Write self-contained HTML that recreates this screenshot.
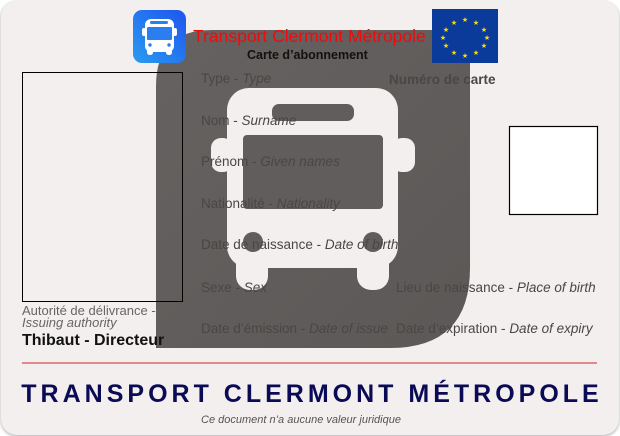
<!DOCTYPE html>
<html><head><meta charset="utf-8"><style>
*{margin:0;padding:0;box-sizing:border-box}
body{width:620px;height:436px;background:#fff;font-family:"Liberation Sans",sans-serif;position:relative;overflow:hidden}
.card{position:absolute;left:1px;top:1px;width:618px;height:434px;background:#f3efee;border-radius:16px;box-shadow:0 1px 3px rgba(0,0,0,.35)}
.a{position:absolute;white-space:nowrap}
.f{font-size:13.5px;color:#4a4646}
.f i{color:#4a4646}
</style></head><body>
<div class="card"></div>
<svg class="a" style="left:0;top:0" width="620" height="436">
<defs><linearGradient id="g" x1="0" y1="0" x2="1" y2="1"><stop offset="0" stop-color="#666261"/><stop offset="1" stop-color="#5c5857"/></linearGradient>
<linearGradient id="b" x1="0" y1="1" x2="1" y2="0"><stop offset="0" stop-color="#2a9bf0"/><stop offset="1" stop-color="#1f55ee"/></linearGradient></defs>
<path d="M156 348 L156 86 Q156 30 212 30 L460 30 Q470 30 470 40 L470 268 Q470 348 390 348 Z" fill="url(#g)"/>
<g fill="#f3efee">
<rect x="227" y="88" width="171" height="180" rx="22"/>
<rect x="211" y="138" width="22" height="34" rx="10"/>
<rect x="392" y="138" width="23" height="34" rx="10"/>
<rect x="236" y="250" width="32" height="40" rx="14"/>
<rect x="357" y="250" width="32" height="40" rx="14"/>
</g>
<g fill="#615d5c">
<rect x="272" y="104" width="82" height="17" rx="7"/>
<rect x="243" y="135" width="140" height="74" rx="4"/>
<circle cx="253" cy="242" r="10"/><circle cx="373" cy="242" r="10"/>
</g>
<rect x="133" y="10" width="53" height="53" rx="9" fill="url(#b)"/>
<g fill="#fff">
<rect x="145" y="19" width="29" height="33" rx="6"/>
<rect x="142" y="28" width="4" height="8" rx="2"/><rect x="173" y="28" width="4" height="8" rx="2"/>
<rect x="147" y="48" width="6" height="7" rx="2.5"/><rect x="166" y="48" width="6" height="7" rx="2.5"/>
</g>
<rect x="150" y="21" width="18" height="3" rx="1.5" fill="#2a7ef0"/>
<rect x="147" y="27" width="25" height="13" rx="1" fill="#2a7ef0"/>
<circle cx="150" cy="45" r="1.7" fill="#2a7ef0"/><circle cx="169" cy="45" r="1.7" fill="#2a7ef0"/>
<rect x="432" y="9" width="66" height="54" fill="#0a3a9a"/>
<g fill="#ffdd00" font-size="7" text-anchor="middle" font-family="DejaVu Sans">
<text x="465" y="22">★</text><text x="476" y="25">★</text><text x="484" y="32">★</text><text x="487" y="40">★</text><text x="484" y="48">★</text><text x="476" y="55">★</text><text x="465" y="58">★</text><text x="454" y="55">★</text><text x="446" y="48">★</text><text x="443" y="40">★</text><text x="446" y="32">★</text><text x="454" y="25">★</text>
</g>
<rect x="22.5" y="72.5" width="160" height="229" fill="none" stroke="#000" stroke-width="1"/>
<rect x="509.5" y="126.5" width="88" height="88" fill="#fff" stroke="#000" stroke-width="1.2"/>
<rect x="22" y="362" width="575" height="2" fill="#e08a90"/>
</svg>
<div class="a" style="left:193px;top:26px;font-size:17.5px;color:#f00a0a">Transport Clermont Métropole</div>
<div class="a" style="left:247px;top:48px;font-size:12.5px;font-weight:bold;color:#111">Carte d’abonnement</div>
<div class="a f" style="left:201px;top:71px">Type - <i>Type</i></div>
<div class="a f" style="left:389px;top:72px;font-weight:bold">Numéro de carte</div>
<div class="a f" style="left:201px;top:113px">Nom - <i>Surname</i></div>
<div class="a f" style="left:201px;top:154px">Prénom - <i>Given names</i></div>
<div class="a f" style="left:201px;top:196px">Nationalité - <i>Nationality</i></div>
<div class="a f" style="left:201px;top:237px">Date de naissance - <i>Date of birth</i></div>
<div class="a f" style="left:201px;top:280px">Sexe - <i>Sex</i></div>
<div class="a f" style="left:396px;top:280px">Lieu de naissance - <i>Place of birth</i></div>
<div class="a f" style="left:201px;top:321px">Date d’émission - <i>Date of issue</i></div>
<div class="a f" style="left:396px;top:321px">Date d’expiration - <i>Date of expiry</i></div>
<div class="a" style="left:22px;top:305px;font-size:13px;color:#666;line-height:12px">Autorité de délivrance -<br><i>Issuing authority</i></div>
<div class="a" style="left:22px;top:332px;font-size:16px;font-weight:bold;color:#111">Thibaut - Directeur</div>
<div class="a" style="left:2px;top:380px;width:620px;text-align:center;font-size:25px;font-weight:bold;color:#0a0a55;letter-spacing:4px">TRANSPORT CLERMONT MÉTROPOLE</div>
<div class="a" style="left:0;top:414px;width:602px;text-align:center;font-size:11px;font-style:italic;color:#555">Ce document n’a aucune valeur juridique</div>
</body></html>
